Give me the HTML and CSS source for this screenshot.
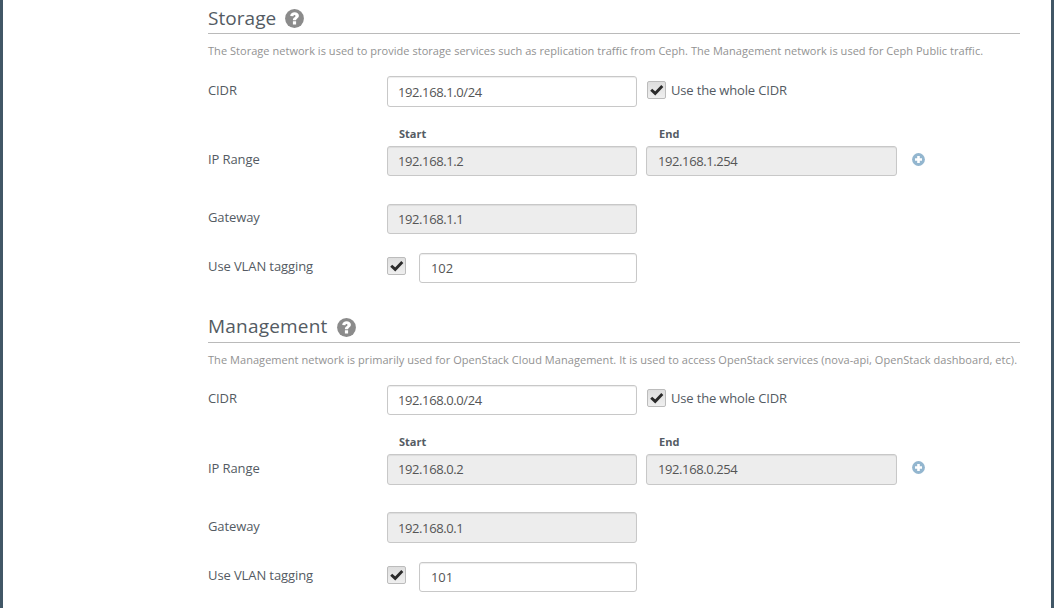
FILE: index.html
```html
<!DOCTYPE html>
<html lang="en">
<head>
<meta charset="utf-8">
<title>Network settings</title>
<link rel="stylesheet" href="styles.css">
</head>
<body>
<svg class="defs" aria-hidden="true">
  <symbol id="help" viewBox="0 0 19 19"><circle cx="9.5" cy="9.5" r="9.4" fill="#8b8b8b"/><path d="M5.200 6.900C5.500 4.500 7.200 3.200 9.600 3.200c2.400 0 4.300 1.300 4.300 3.500 0 2.600-2.800 2.700-2.800 4.500H7.900c0-3 2.600-2.900 2.600-4.300 0-1.200-1.900-1.200-2.200.4zM7.900 12.300h3.200v3.200H7.900z" fill="#fff"/></symbol>
  <symbol id="plus" viewBox="0 0 13 13"><circle cx="6.500" cy="6.500" r="6.400" fill="#93b6cf"/><path d="M5.200 3h2.600v2.200H10v2.600H7.800V10H5.200V7.800H3V5.200h2.200z" fill="#fff"/></symbol>
  <symbol id="check" viewBox="0 0 18 18"><path d="M3.200 8.700L7.200 12.400 14.300 4.900" fill="none" stroke="#2b2b2b" stroke-width="2.900"/></symbol>
</svg>
<main class="panel">
  <section class="network storage">
    <h3 class="title"><span>Storage</span><svg class="help"><use href="#help"/></svg></h3>
    <p class="description">The Storage network is used to provide storage services such as replication traffic from Ceph. The Management network is used for Ceph Public traffic.</p>
    <div class="row cidr"><span class="label">CIDR</span><div class="input">192.168.1.0/24</div><span class="checkbox"><svg><use href="#check"/></svg></span><span class="check-label">Use the whole CIDR</span></div>
    <div class="range-heads"><b>Start</b><b>End</b></div>
    <div class="row range"><span class="label">IP Range</span><div class="input disabled">192.168.1.2</div><div class="input disabled end">192.168.1.254</div><svg class="plus"><use href="#plus"/></svg></div>
    <div class="row gateway"><span class="label">Gateway</span><div class="input disabled">192.168.1.1</div></div>
    <div class="row vlan"><span class="label">Use VLAN tagging</span><span class="checkbox"><svg><use href="#check"/></svg></span><div class="input tag">102</div></div>
  </section>
  <section class="network management">
    <h3 class="title"><span>Management</span><svg class="help"><use href="#help"/></svg></h3>
    <p class="description">The Management network is primarily used for OpenStack Cloud Management. It is used to access OpenStack services (nova-api, OpenStack dashboard, etc).</p>
    <div class="row cidr"><span class="label">CIDR</span><div class="input">192.168.0.0/24</div><span class="checkbox"><svg><use href="#check"/></svg></span><span class="check-label">Use the whole CIDR</span></div>
    <div class="range-heads"><b>Start</b><b>End</b></div>
    <div class="row range"><span class="label">IP Range</span><div class="input disabled">192.168.0.2</div><div class="input disabled end">192.168.0.254</div><svg class="plus"><use href="#plus"/></svg></div>
    <div class="row gateway"><span class="label">Gateway</span><div class="input disabled">192.168.0.1</div></div>
    <div class="row vlan"><span class="label">Use VLAN tagging</span><span class="checkbox"><svg><use href="#check"/></svg></span><div class="input tag">101</div></div>
  </section>
</main>
</body>
</html>
```
FILE: styles.css
```css
* { box-sizing: border-box; }
body {
  margin: 0;
  background: #fff;
  color: #545b63;
  font: 13px/18px "Open Sans", sans-serif;
}
.defs { display: none; }
.panel {
  height: 608px;
  overflow: hidden;
  border: solid #415766;
  border-width: 0 3px;
  padding: 0 31px 0 205px;
}
.network { height: 309px; }
.title {
  display: flex;
  align-items: center;
  gap: 9px;
  height: 34px;
  margin: 0;
  padding-top: 4px;
  border-bottom: 1px solid #bababa;
  font-size: 19px;
  font-weight: 400;
  line-height: 28px;
  letter-spacing: .05px;
}
.title span { padding-bottom: 2px; }
.help { width: 19px; height: 19px; }
.description {
  height: 18px;
  margin: 8px 0 16px;
  color: #929292;
  font-size: 11px;
  letter-spacing: .036px;
  white-space: nowrap;
}
.row { display: flex; align-items: flex-start; }
.label { width: 179px; padding-top: 4px; letter-spacing: -.1px; }
.input {
  width: 250px;
  height: 30px;
  padding: 5px 10px;
  border: 1px solid #c8c8c8;
  border-radius: 3px;
  box-shadow: inset 0 1px 1px rgba(0, 0, 0, .075);
  color: #555;
  letter-spacing: -.4px;
}
.cidr .input { height: 31px; padding-top: 6px; }
.disabled { background: #ededed; }
.end { width: 251px; margin-left: 9px; padding-left: 11px; }
.checkbox {
  width: 19px;
  height: 18px;
  margin-top: 4px;
  border: 1px solid #bcbcbc;
  border-radius: 2px;
  background: linear-gradient(#dedede, #efefef);
}
.checkbox svg { display: block; width: 18px; height: 18px; margin: -1px -.5px; }
.cidr .checkbox { margin-left: 10px; margin-top: 5px; }
.check-label { padding: 5px 0 0 5px; letter-spacing: -.16px; }
.cidr .label { padding-top: 5px; }
.range-heads {
  display: flex;
  height: 18px;
  margin: 18px 0 3px;
  padding-left: 191px;
  font-size: 11px;
}
.range-heads b { width: 260px; }
.plus { width: 13px; height: 13px; margin: 7px 0 0 15px; }
.gateway { margin-top: 28px; }
.vlan { margin-top: 19px; }
.tag { width: 218px; margin-left: 13px; padding-left: 11px; letter-spacing: -.1px; }

.management .title { letter-spacing: .2px; }
.management .title span { padding-bottom: 3px; }
.management .description { letter-spacing: .051px; }
.management .cidr .input { height: 30px; padding-top: 5px; }
.management .cidr .label,
.management .cidr .check-label { padding-top: 4px; }
.management .cidr .checkbox { margin-top: 4px; }
.management .disabled { height: 31px; }
.management .gateway { margin-top: 27px; }
.management .range .label,
.management .gateway .label { padding-top: 5px; }
.management .gateway .input { padding-top: 6px; }
```
